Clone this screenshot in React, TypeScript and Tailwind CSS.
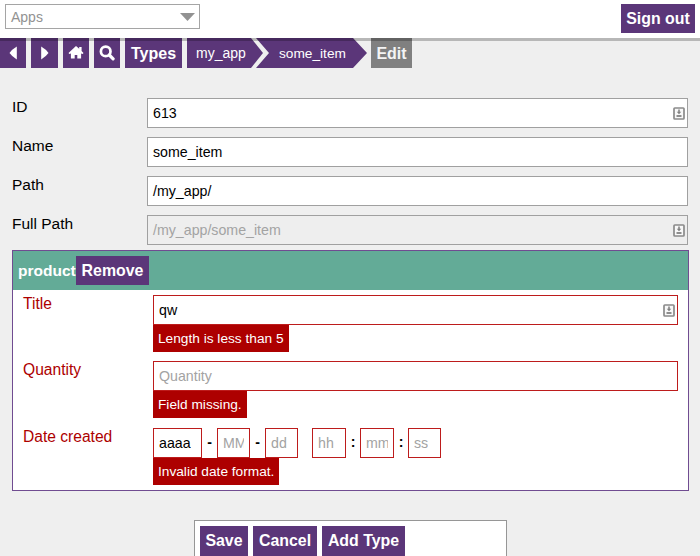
import type { ReactNode } from "react";

function SaveBadge() {
  return (
    <svg className="block h-[13px] w-[12px] shrink-0" viewBox="0 0 12 13" fill="none">
      <rect x="1" y="1" width="10" height="11" rx="0.8" fill="#f8f8f8" stroke="#8b8b8b" strokeWidth="1.7" />
      <path d="M6 2.6v3" stroke="#858585" strokeWidth="1.6" />
      <path d="M3.7 4.8h4.6L6 7.3z" fill="#808080" />
      <path d="M3.5 9h5" stroke="#808080" strokeWidth="1.8" />
    </svg>
  );
}

function NavButton({ width, label, children }: { width: string; label: string; children: ReactNode }) {
  return (
    <button aria-label={label} className={`flex h-[30px] items-center justify-center bg-[#5b3679] text-white ${width}`}>
      {children}
    </button>
  );
}

function Row({ label, value, badge, disabled }: { label: string; value: string; badge?: boolean; disabled?: boolean }) {
  return (
    <div className="flex h-[39px]">
      <div className="w-[135px] shrink-0 text-[15.5px] leading-[18px]">{label}</div>
      <div
        className={`flex h-[30px] w-[541px] items-center justify-between border border-[#a0a0a0] pr-[2px] pl-[5px] text-[14.2px] ${
          disabled ? "bg-[#eeeeee] text-[#a3a3a3]" : "bg-white text-black"
        }`}
      >
        <span className="pt-[2px]">{value}</span>
        {badge && <SaveBadge />}
      </div>
    </div>
  );
}

function ErrorText({ width, children }: { width: string; children: ReactNode }) {
  return <div className={`h-[27px] bg-[#ad0000] pl-[5px] text-[13.7px] leading-[27px] whitespace-nowrap text-white ${width}`}>{children}</div>;
}

function ErrorRow({ label, height, children }: { label: string; height: string; children: ReactNode }) {
  return (
    <div className={`flex ${height}`}>
      <div className="w-[131px] shrink-0 pl-px text-[15.6px] leading-[18px] text-[#ad0000]">{label}</div>
      <div>{children}</div>
    </div>
  );
}

function DatePart({ text, width, filled }: { text: string; width: string; filled?: boolean }) {
  return (
    <div className={`flex h-[30px] items-center border border-[#bd1c1c] bg-white px-[5px] ${width} ${filled ? "text-black" : "text-[#a3a3a3]"}`}>
      <span className="overflow-hidden pt-px">{text}</span>
    </div>
  );
}

function Separator({ text, width }: { text: string; width: string }) {
  return <span className={`text-center font-bold ${width}`}>{text}</span>;
}

export default function App() {
  return (
    <div className="flex h-[556px] w-[700px] flex-col overflow-hidden bg-[#efefef] font-['Liberation_Sans',sans-serif] text-black">
      <header className="relative z-10 flex h-[38px] shrink-0 items-start justify-between bg-white pt-1 pr-[5px] pl-[5px] shadow-[0_3px_0_rgba(0,0,0,0.23)]">
        <div className="flex h-[25px] w-[195px] items-center justify-between border border-[#a5a5a5] pr-[4px] pl-[5px] text-[14px] text-[#929292]">
          <span className="pt-[2px]">Apps</span>
          <svg className="h-[8px] w-[15px]" viewBox="0 0 15 8">
            <path d="M0 0h15L7.5 8z" fill="#929292" />
          </svg>
        </div>
        <button className="h-[29px] w-[74px] bg-[#5b3679] pt-px text-[15.9px] font-bold whitespace-nowrap text-white">Sign out</button>
      </header>

      <nav className="flex h-[30px] shrink-0">
        <div className="flex gap-[5px]">
          <NavButton width="w-[26px]" label="Back">
            <svg className="h-[14px] w-[10px]" viewBox="0 0 10 14"><path d="M8.8 .6v12.8Q4 10.5 1.5 7 4 3.5 8.8.6z" fill="white" /></svg>
          </NavButton>
          <NavButton width="w-[27px]" label="Forward">
            <svg className="h-[14px] w-[10px]" viewBox="0 0 10 14"><path d="M1.2 .6v12.8Q6 10.5 8.5 7 6 3.5 1.2.6z" fill="white" /></svg>
          </NavButton>
          <NavButton width="w-[26px]" label="Home">
            <svg className="mb-[1px] h-[13px] w-[16px]" viewBox="0 0 16 13" fill="white">
              <path d="M8 0L.5 7l.8 1 1.6-.4V12.5h3.8V9h2.6v3.5h3.8V7.6l1.6.4.8-1-1.9-1.9V1h-2.4v1.7z" />
            </svg>
          </NavButton>
          <NavButton width="w-[26px]" label="Search">
            <svg className="mb-px h-[16px] w-[16px]" viewBox="0 0 16 16" fill="none" stroke="white">
              <circle cx="6.7" cy="6.4" r="4.8" strokeWidth="2.7" />
              <path d="M10.3 10l3.8 3.8" strokeWidth="3.2" strokeLinecap="round" />
            </svg>
          </NavButton>
          <NavButton width="w-[57px]" label="Types">
            <span className="pt-[2px] text-[16px] font-bold">Types</span>
          </NavButton>
        </div>
        <div className="ml-[5px] flex text-[13.7px] leading-[31px] text-white">
          <div className="h-[30px] w-[76px] bg-[#5b3679] pl-[9px] text-[14px] [clip-path:polygon(0_0,64px_0,76px_50%,64px_100%,0_100%)]">my_app</div>
          <div className="-ml-[7px] h-[30px] w-[111px] bg-[#5b3679] pl-[23px] [clip-path:polygon(0_0,97px_0,111px_50%,97px_100%,0_100%,13px_50%)]">some_item</div>
        </div>
        <div className="ml-[4px] h-[30px] w-[41px] bg-[#808080] text-center text-[16px] leading-[31px] font-bold text-[#f4f4f4]">Edit</div>
      </nav>

      <main className="flex flex-col pt-[30px] pl-[12px]">
        <Row label="ID" value="613" badge />
        <Row label="Name" value="some_item" />
        <Row label="Path" value="/my_app/" />
        <Row label="Full Path" value="/my_app/some_item" badge disabled />

        <section className="-mt-[4px] h-[241px] w-[677px] border border-[#704c91] bg-white">
          <div className="flex h-[39px] items-center bg-[#63ab97] pl-[5px] text-[15.5px] font-bold text-white">
            <span className="w-[58px]">product</span>
            <button className="h-[29px] w-[73px] bg-[#5b3679] pt-px text-[15.9px] font-bold">Remove</button>
          </div>
          <div className="pt-[5px] pl-[9px]">
            <ErrorRow label="Title" height="h-[66px]">
              <div className="flex h-[30px] w-[525px] items-center justify-between border border-[#bd1c1c] pr-[2px] pl-[5px] text-[14.2px]">
                <span className="pt-px">qw</span>
                <SaveBadge />
              </div>
              <ErrorText width="w-[136px]">Length is less than 5</ErrorText>
            </ErrorRow>
            <ErrorRow label="Quantity" height="h-[67px]">
              <div className="flex h-[30px] w-[525px] items-center border border-[#bd1c1c] pl-[5px] text-[14.2px] text-[#a3a3a3]">
                <span className="pt-[2px]">Quantity</span>
              </div>
              <ErrorText width="w-[94px]">Field missing.</ErrorText>
            </ErrorRow>
            <ErrorRow label="Date created" height="h-[58px]">
              <div className="flex items-center text-[14.2px]">
                <DatePart text="aaaa" width="w-[49px]" filled />
                <Separator text="-" width="w-[15px]" />
                <DatePart text="MM" width="w-[33px]" />
                <Separator text="-" width="w-[15px]" />
                <DatePart text="dd" width="w-[33px]" />
                <span className="w-[14px]" />
                <DatePart text="hh" width="w-[34px]" />
                <Separator text=":" width="w-[14px]" />
                <DatePart text="mm" width="w-[34px]" />
                <Separator text=":" width="w-[14px]" />
                <DatePart text="ss" width="w-[33px]" />
              </div>
              <ErrorText width="w-[126px]">Invalid date format.</ErrorText>
            </ErrorRow>
          </div>
        </section>
      </main>

      <footer className="mt-[29px] ml-[194px] flex h-[40px] w-[313px] shrink-0 gap-[5px] border border-[#969696] bg-white pt-[5px] pl-[5px] text-[15.9px] font-bold text-white">
        <button className="h-[30px] w-[48px] bg-[#5b3679]">Save</button>
        <button className="h-[30px] w-[64px] bg-[#5b3679]">Cancel</button>
        <button className="h-[30px] w-[83px] bg-[#5b3679] whitespace-nowrap">Add Type</button>
      </footer>
    </div>
  );
}
